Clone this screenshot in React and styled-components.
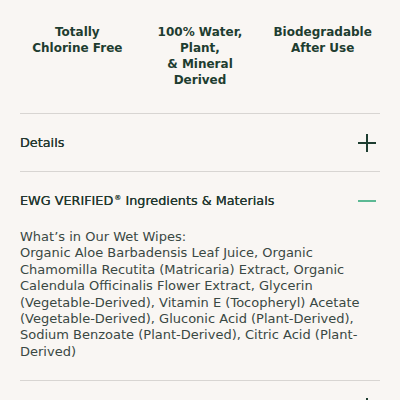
import styled, { createGlobalStyle } from "styled-components";

const GlobalStyle = createGlobalStyle`
  body {
    margin: 0;
    background: #f9f6f3;
    font-family: "DejaVu Sans", sans-serif;
  }
`;

const features = [
  ["Totally", "Chlorine Free"],
  ["100% Water,", "Plant,", "& Mineral", "Derived"],
  ["Biodegradable", "After Use"],
];

const ingredients =
  "Organic Aloe Barbadensis Leaf Juice, Organic Chamomilla Recutita (Matricaria) Extract, Organic Calendula Officinalis Flower Extract, Glycerin (Vegetable-Derived), Vitamin E (Tocopheryl) Acetate (Vegetable-Derived), Gluconic Acid (Plant-Derived), Sodium Benzoate (Plant-Derived), Citric Acid (Plant-Derived)";

const PlusIcon = () => (
  <svg width="20" height="20" viewBox="0 0 20 20">
    <path d="M10 1v18M1 10h18" stroke="#1e3d30" strokeWidth="2" />
  </svg>
);

const MinusIcon = () => (
  <svg width="20" height="20" viewBox="0 0 20 20">
    <path d="M1 10h18" stroke="#5cb994" strokeWidth="2" />
  </svg>
);

const App = () => {
  return (
    <Page>
      <GlobalStyle />
      <Features>
        {features.map((lines, i) => (
          <Feature key={i}>
            {lines.map((l) => (
              <div key={l}>{l}</div>
            ))}
          </Feature>
        ))}
      </Features>

      <Section>
        <Header>
          <Title>Details</Title>
          <PlusIcon />
        </Header>
      </Section>

      <Section>
        <Header>
          <Title>
            EWG VERIFIED<Reg>®</Reg> Ingredients &amp; Materials
          </Title>
          <MinusIcon />
        </Header>
        <Body>
          <div>What’s in Our Wet Wipes:</div>
          <div>{ingredients}</div>
        </Body>
      </Section>

      <Section>
        <Header $short>
          <Title></Title>
          <PlusIcon />
        </Header>
      </Section>
    </Page>
  );
};

export default App;

const Page = styled.div`
  padding: 0 20px;
  color: #1e3d30;
`;

const Features = styled.div`
  display: grid;
  grid-template-columns: repeat(3, 1fr);
  gap: 8px;
  padding: 24px 0 25px;
  border-bottom: 1px solid #d8d5d2;
`;

const Feature = styled.div`
  text-align: center;
  font-weight: 700;
  font-size: 12px;
  line-height: 16px;
  color: #1e3d30;
`;

const Section = styled.div`
  border-bottom: 1px solid #d8d5d2;
`;

const Header = styled.div`
  display: flex;
  align-items: center;
  justify-content: space-between;
  height: ${(p) => (p.$short ? "52px" : "57px")};
  padding-right: 3px;
`;

const Title = styled.div`
  font-size: 12.8px;
  color: #23382f;
  text-shadow: 0 0 0.3px #23382f;
`;

const Reg = styled.sup`
  font-size: 7px;
  vertical-align: 5px;
  margin-left: 1px;
`;

const Body = styled.div`
  font-size: 13px;
  line-height: 16.4px;
  color: #3a4843;
  padding: 0 0 20px;
`;
